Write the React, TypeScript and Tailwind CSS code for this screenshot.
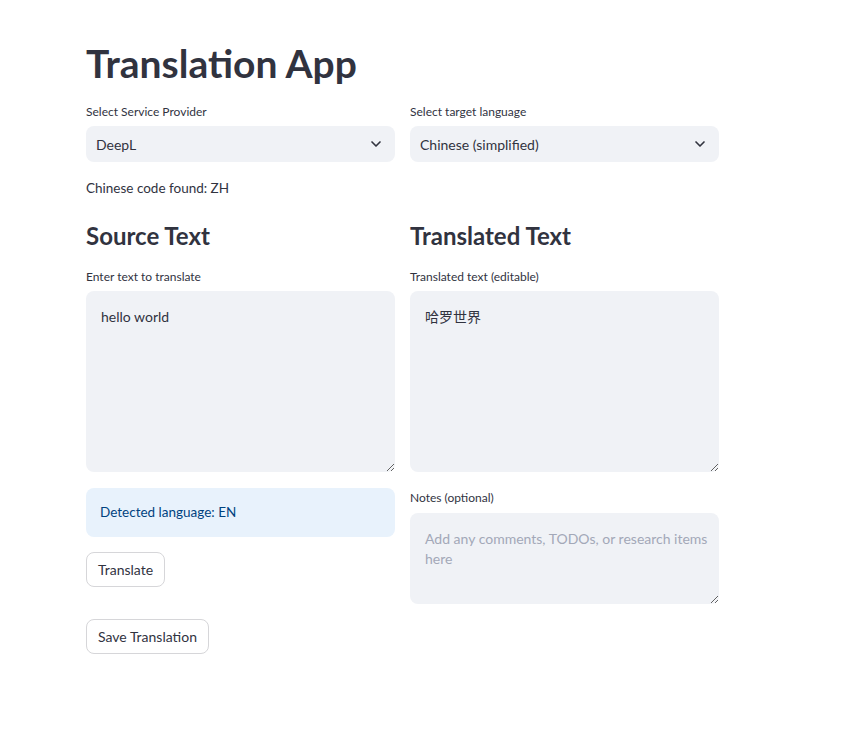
import { ChevronDown } from "lucide-react";

const font = { fontFamily: "Lato, 'Noto Sans CJK SC', sans-serif" };

const Label = ({ children, gap = "mb-[6px]" }: { children: React.ReactNode; gap?: string }) => (
  <div className={`${gap} text-[12px] leading-[16px] text-[#31333f]`}>{children}</div>
);

const SelectBox = ({ label, value }: { label: string; value: string }) => (
  <div>
    <Label>{label}</Label>
    <div className="flex h-[36px] items-center justify-between rounded-[8px] bg-[#f0f2f6] pl-[10px] pr-[11px] text-[14px] text-[#31333f]">
      <span>{value}</span>
      <ChevronDown size={16} strokeWidth={2.5} className="text-[#31333f]" />
    </div>
  </div>
);

const TextBox = ({
  label,
  value,
  placeholder,
  height,
  gap,
}: {
  label: string;
  value?: string;
  placeholder?: string;
  height: string;
  gap?: string;
}) => (
  <div>
    <Label gap={gap}>{label}</Label>
    <textarea
      readOnly
      defaultValue={value}
      placeholder={placeholder}
      className={`block w-full ${height} rounded-[8px] bg-[#f0f2f6] pb-[15px] pl-[15px] pr-[10px] pt-[16px] text-[14px] leading-[20px] text-[#31333f] outline-none placeholder:text-[#a3a8b8]`}
    />
  </div>
);

const Btn = ({ children }: { children: React.ReactNode }) => (
  <button className="h-[35px] rounded-[8px] border border-[#d6d6d9] bg-white px-[11px] text-[14px] text-[#31333f]">
    {children}
  </button>
);

export default function App() {
  return (
    <div className="min-h-[740px] bg-white" style={font}>
      <div className="w-[719px] pl-[86px] pt-[38px]">
        <h1 className="text-[39px] font-bold leading-[50px] text-[#31333f]">Translation App</h1>

        <div className="mt-[16px] grid grid-cols-2 gap-[15px]">
          <SelectBox label="Select Service Provider" value="DeepL" />
          <SelectBox label="Select target language" value="Chinese (simplified)" />
        </div>

        <p className="mt-[17px] text-[13.5px] leading-[18px] text-[#31333f]">Chinese code found: ZH</p>

        <div className="mt-[23px] grid grid-cols-2 gap-[15px]">
          <div className="flex flex-col">
            <h2 className="text-[24px] font-bold leading-[32px] text-[#31333f]">Source Text</h2>
            <div className="mt-[17px]">
              <TextBox label="Enter text to translate" value="hello world" height="h-[181px]" />
            </div>
            <div className="mt-[16px] flex h-[49px] items-center rounded-[8px] bg-[#e8f2fc] px-[14px] text-[13.5px] text-[#004280]">
              Detected language: EN
            </div>
            <div className="mt-[15px]">
              <Btn>Translate</Btn>
            </div>
            <div className="mt-[32px]">
              <Btn>Save Translation</Btn>
            </div>
          </div>
          <div className="flex flex-col">
            <h2 className="text-[24px] font-bold leading-[32px] text-[#31333f]">Translated Text</h2>
            <div className="mt-[17px]">
              <TextBox label="Translated text (editable)" value="哈罗世界" height="h-[181px]" />
            </div>
            <div className="mt-[18px]">
              <TextBox
                label="Notes (optional)"
                placeholder="Add any comments, TODOs, or research items here"
                height="h-[91px]"
                gap="mb-[7px]"
              />
            </div>
          </div>
        </div>
      </div>
    </div>
  );
}
